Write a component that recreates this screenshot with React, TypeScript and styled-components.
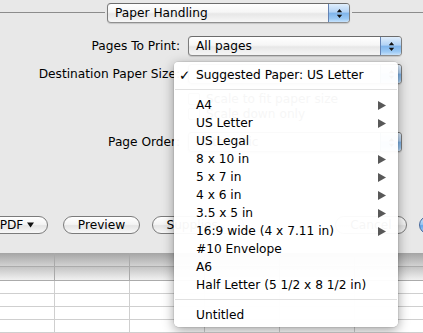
import React from 'react';
import styled, { createGlobalStyle } from 'styled-components';

const Global = createGlobalStyle`
  html, body { margin: 0; padding: 0; background: #e8e8e8; }
  body {
    width: 423px; height: 333px; overflow: hidden;
    font-family: "DejaVu Sans", "Liberation Sans", sans-serif;
    font-size: 12.2px; color: #000;
  }
  #root { width: 423px; height: 333px; overflow: hidden; }
`;

const Page = styled.div`
  position: relative;
  width: 423px;
  height: 333px;
  overflow: hidden;
  background: #e8e8e8;
  display: flex;
  flex-direction: column;
`;

const HeaderRow = styled.div`
  display: flex;
  align-items: flex-start;
  padding-top: 3px;
  height: 20px;
`;

const Rule = styled.div<{ $w?: number; $top?: number }>`
  height: 1px;
  background: #8c8c8c;
  margin-top: ${(p) => p.$top ?? 0}px;
  ${(p) => (p.$w ? `width: ${p.$w}px; flex: none;` : 'flex: 1;')}
`;

const Popup = styled.div<{ $w: number; $mx?: number }>`
  display: flex;
  flex: none;
  width: ${(p) => p.$w}px;
  height: 20px;
  box-sizing: border-box;
  margin: 0 ${(p) => p.$mx ?? 0}px;
  border: 1px solid #7c7c7c;
  border-top-color: #6c6c6c;
  border-bottom-color: #909090;
  border-radius: 4px;
  overflow: hidden;
  background: linear-gradient(#ffffff 0%, #f6f6f6 45%, #e7e7e7 55%, #f7f7f7 100%);
  box-shadow: 0 1px 1px rgba(0, 0, 0, 0.15);
`;

const PopupLabel = styled.span`
  flex: 1;
  padding-left: 7px;
  line-height: 18px;
  white-space: nowrap;
  overflow: hidden;
`;

const PopupArrows = styled.span`
  width: 20px;
  flex: none;
  border-left: 1px solid #6483b3;
  display: flex;
  align-items: center;
  justify-content: center;
  background: linear-gradient(#e0eefc 0%, #b3d3f5 44%, #80b5eb 52%, #9ccaf5 82%, #c8e3fc 100%);
`;

const FieldRow = styled.div<{ $mt: number; $h?: number }>`
  display: grid;
  grid-template-columns: 180px 214px;
  column-gap: 8px;
  align-items: center;
  margin-top: ${(p) => p.$mt}px;
  height: ${(p) => p.$h ?? 20}px;
`;

const Label = styled.div`
  text-align: right;
  white-space: nowrap;
`;

const Check = styled.div`
  display: flex;
  align-items: center;
  gap: 6px;
  white-space: nowrap;
`;

const CheckBox = styled.span`
  width: 12px;
  height: 12px;
  box-sizing: border-box;
  border: 1px solid #8a8a8a;
  border-radius: 2px;
  background: linear-gradient(#ffffff, #e9e9e9);
`;

const ButtonRow = styled.div`
  display: flex;
  align-items: center;
  height: 18px;
  margin: 18px -66px 0 -14px;
`;

const Spacer = styled.div`
  flex: 1;
`;

const Button = styled.div<{ $w: number; $ml?: number; $blue?: boolean }>`
  flex: none;
  width: ${(p) => p.$w}px;
  height: 18px;
  box-sizing: border-box;
  margin-left: ${(p) => p.$ml ?? 0}px;
  border: 1px solid ${(p) => (p.$blue ? '#46689c' : '#7b7b7b')};
  border-radius: 9px;
  display: flex;
  align-items: center;
  justify-content: center;
  gap: 4px;
  line-height: 16px;
  white-space: nowrap;
  background: ${(p) =>
    p.$blue
      ? 'linear-gradient(#d2e7fc 0%, #98c7f3 46%, #65a7ec 54%, #a9d5fb 100%)'
      : 'linear-gradient(#ffffff 0%, #f4f4f4 46%, #e4e4e4 54%, #f8f8f8 100%)'};
`;

const Grid = styled.div`
  margin-top: 19px;
  display: flex;
  flex-direction: column;
`;

const GridRow = styled.div<{ $kind: 'head' | 'sub' | 'body'; $h: number }>`
  display: grid;
  grid-template-columns: 55px 75px 75px 75px 75px 75px;
  height: ${(p) => p.$h}px;
  border-bottom: 1px solid ${(p) => (p.$kind === 'body' ? '#cfcfcf' : '#ababab')};
  background: ${(p) =>
    p.$kind === 'head'
      ? 'linear-gradient(#a4a4a4, #d2d2d2)'
      : p.$kind === 'sub'
      ? 'linear-gradient(#c4c4c4, #f1f1f1)'
      : '#ffffff'};
`;

const Cell = styled.div<{ $dark: boolean }>`
  border-right: 1px solid ${(p) => (p.$dark ? '#a9a9a9' : '#cfcfcf')};
`;

const Menu = styled.div`
  position: absolute;
  left: 174px;
  top: 62px;
  width: 224px;
  box-sizing: border-box;
  padding: 4px 0 3px;
  background: rgba(255, 255, 255, 0.965);
  border-radius: 4px 4px 5px 5px;
  box-shadow: 0 3px 12px rgba(0, 0, 0, 0.38), 0 0 0 0.5px rgba(0, 0, 0, 0.12);
`;

const MenuItem = styled.div`
  display: flex;
  align-items: center;
  height: 18px;
  line-height: 18px;
  white-space: nowrap;
`;

const CheckSlot = styled.span`
  width: 22px;
  flex: none;
  box-sizing: border-box;
  padding-left: 5px;
  font-size: 13.5px;
`;

const ItemText = styled.span`
  flex: 1;
`;

const SubArrow = styled.svg`
  width: 8px;
  height: 9px;
  margin-right: 12px;
  flex: none;
`;

const MenuSep = styled.div`
  height: 1px;
  margin: 5px 1px 6px;
  background: #e1e1e1;
`;

const Arrows = () => (
  <svg width="7" height="11" viewBox="0 0 7 11">
    <path d="M0.8 4.2 L3.5 1 L6.2 4.2 Z M0.8 6.8 L3.5 10 L6.2 6.8 Z" fill="#111" />
  </svg>
);

const items: { t: string; sub?: boolean }[] = [
  { t: 'A4', sub: true },
  { t: 'US Letter', sub: true },
  { t: 'US Legal' },
  { t: '8 x 10 in', sub: true },
  { t: '5 x 7 in', sub: true },
  { t: '4 x 6 in', sub: true },
  { t: '3.5 x 5 in', sub: true },
  { t: '16:9 wide (4 x 7.11 in)', sub: true },
  { t: '#10 Envelope' },
  { t: 'A6' },
  { t: 'Half Letter (5 1/2 x 8 1/2 in)' },
];

const gridRows: { kind: 'head' | 'sub' | 'body'; h: number }[] = [
  { kind: 'head', h: 13 },
  { kind: 'sub', h: 13 },
  { kind: 'body', h: 12 },
  { kind: 'body', h: 12 },
  { kind: 'body', h: 12 },
  { kind: 'body', h: 12 },
];

export default function App() {
  return (
    <Page>
      <Global />
      <HeaderRow>
        <Rule $w={105} $top={9} />
        <Popup $w={243} $mx={2}>
          <PopupLabel>Paper Handling</PopupLabel>
          <PopupArrows>
            <Arrows />
          </PopupArrows>
        </Popup>
        <Rule $top={9} />
      </HeaderRow>

      <FieldRow $mt={13}>
        <Label>Pages To Print:</Label>
        <Popup $w={214}>
          <PopupLabel>All pages</PopupLabel>
          <PopupArrows>
            <Arrows />
          </PopupArrows>
        </Popup>
      </FieldRow>
      <FieldRow $mt={8}>
        <Label>Destination Paper Size:</Label>
        <Popup $w={214}>
          <PopupLabel>Suggested Paper: US Letter</PopupLabel>
          <PopupArrows>
            <Arrows />
          </PopupArrows>
        </Popup>
      </FieldRow>
      <FieldRow $mt={8} $h={17}>
        <span />
        <Check>
          <CheckBox />
          Scale to fit paper size
        </Check>
      </FieldRow>
      <FieldRow $mt={1} $h={17}>
        <span />
        <Check>
          <CheckBox />
          Scale down only
        </Check>
      </FieldRow>
      <FieldRow $mt={11}>
        <Label>Page Order:</Label>
        <Popup $w={214}>
          <PopupLabel>Automatic</PopupLabel>
          <PopupArrows>
            <Arrows />
          </PopupArrows>
        </Popup>
      </FieldRow>

      <Rule $top={46} />

      <ButtonRow>
        <Button $w={62}>
          PDF
          <svg width="7" height="6" viewBox="0 0 7 6">
            <path d="M0 0.5 H7 L3.5 5.5 Z" fill="#111" />
          </svg>
        </Button>
        <Button $w={77} $ml={15}>
          Preview
        </Button>
        <Button $w={92} $ml={12}>
          Supplies...
        </Button>
        <Spacer />
        <Button $w={72}>Cancel</Button>
        <Button $w={70} $ml={12} $blue>
          Print
        </Button>
      </ButtonRow>

      <Grid>
        {gridRows.map((r, i) => (
          <GridRow key={i} $kind={r.kind} $h={r.h}>
            {[0, 1, 2, 3, 4, 5].map((c) => (
              <Cell key={c} $dark={r.kind !== 'body'} />
            ))}
          </GridRow>
        ))}
      </Grid>

      <Menu>
        <MenuItem>
          <CheckSlot>✓</CheckSlot>
          <ItemText>Suggested Paper: US Letter</ItemText>
        </MenuItem>
        <MenuSep />
        {items.map((it) => (
          <MenuItem key={it.t}>
            <CheckSlot />
            <ItemText>{it.t}</ItemText>
            {it.sub && (
              <SubArrow viewBox="0 0 8 9">
                <path d="M0 0 L8 4.5 L0 9 Z" fill="#585858" />
              </SubArrow>
            )}
          </MenuItem>
        ))}
        <MenuSep />
        <MenuItem>
          <CheckSlot />
          <ItemText>Untitled</ItemText>
        </MenuItem>
      </Menu>
    </Page>
  );
}
